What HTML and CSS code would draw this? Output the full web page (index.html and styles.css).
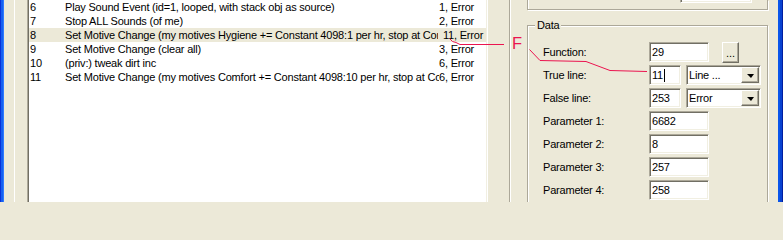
FILE: index.html
```html
<!DOCTYPE html>
<html>
<head>
<meta charset="utf-8">
<link rel="stylesheet" href="styles.css">
</head>
<body>
<div class="window">
  <div class="frame frame-left"></div>
  <div class="sidebar"><div class="splitter"></div></div>
  <div class="list">
    <div class="list-inner">
      <div class="row"><span class="num">6</span><span class="desc">Play Sound Event (id=1, looped, with stack obj as source)</span><span class="status">1, Error</span></div>
      <div class="row"><span class="num">7</span><span class="desc">Stop ALL Sounds (of me)</span><span class="status">2, Error</span></div>
      <div class="row row-sel"><span class="num">8</span><span class="desc desc-wide">Set Motive Change (my motives Hygiene += Constant 4098:1 per hr, stop at Comfort &lt;= 100)</span><span class="status status-wide">11, Error</span></div>
      <div class="row"><span class="num">9</span><span class="desc">Set Motive Change (clear all)</span><span class="status">3, Error</span></div>
      <div class="row"><span class="num">10</span><span class="desc">(priv:) tweak dirt inc</span><span class="status">6, Error</span></div>
      <div class="row"><span class="num">11</span><span class="desc">Set Motive Change (my motives Comfort += Constant 4098:10 per hr, stop at Comfort &lt;= 100)</span><span class="status">6, Error</span></div>
    </div>
  </div>
  <div class="panel">
    <div class="group-top"><div class="field field-top"></div></div>
    <fieldset class="group-data">
      <legend>Data</legend>
      <div class="frow"><span class="flabel">Function:</span><div class="field w60">29</div><div class="btn">...</div></div>
      <div class="frow"><span class="flabel">True line:</span><div class="field w32">11<span class="caret"></span></div><div class="combo"><span class="combo-text">Line ...</span><span class="combo-btn"><span class="arrow"></span></span></div></div>
      <div class="frow"><span class="flabel">False line:</span><div class="field w32">253</div><div class="combo"><span class="combo-text">Error</span><span class="combo-btn"><span class="arrow"></span></span></div></div>
      <div class="frow"><span class="flabel">Parameter 1:</span><div class="field w60">6682</div></div>
      <div class="frow"><span class="flabel">Parameter 2:</span><div class="field w60">8</div></div>
      <div class="frow"><span class="flabel">Parameter 3:</span><div class="field w60">257</div></div>
      <div class="frow"><span class="flabel">Parameter 4:</span><div class="field w60">258</div></div>
    </fieldset>
  </div>
  <div class="frame frame-right"></div>
  <svg class="annot" width="783" height="202" viewBox="0 0 783 202">
    <path d="M449.5 38.5 L452.5 41.5 L456 42.5 L460 44.5 L504 44.5" />
    <path d="M529.5 49.5 L540 60.5 L586 61.5 L610 70.5 L647 71.5" />
    <text x="512" y="49">F</text>
  </svg>
</div>
</body>
</html>
```
FILE: styles.css
```css
html {
  height: 202px;
  overflow: hidden;
}
html, body {
  margin: 0;
  padding: 0;
}
body {
  width: 783px;
  height: 202px;
  overflow: hidden;
  background: #ece9d8;
  font-family: "Liberation Sans", Arial, sans-serif;
  font-size: 11px;
  letter-spacing: -0.2px;
  color: #000;
}
.window {
  position: relative;
  display: flex;
  width: 783px;
  height: 202px;
  overflow: hidden;
}
.frame-left {
  width: 4px;
  flex: none;
  background: linear-gradient(to right, #0831d9 0 1px, #1660f0 1px 3px, #2e7bff 3px 4px);
}
.frame-right {
  width: 5px;
  flex: none;
  background: linear-gradient(to right, #0a55ea 0 2px, #0842d0 2px 4px, #001ea0 4px 5px);
}
.sidebar {
  width: 23px;
  flex: none;
}
.splitter {
  margin-left: 10px;
  height: 100%;
  border-left: 1px solid #fff;
}
.list {
  width: 459px;
  flex: none;
  border-left: 1px solid #aca899;
  border-right: 1px solid #fff;
}
.list-inner {
  height: 100%;
  background: #fff;
  border-left: 1px solid #716f64;
  border-right: 1px solid #f1efe2;
  overflow: hidden;
}
.row {
  display: flex;
  height: 14px;
  line-height: 14px;
  white-space: nowrap;
}
.row-sel {
  background: #ece9d8;
}
.num {
  width: 35px;
  padding-left: 1px;
  flex: none;
}
.desc {
  width: 374px;
  flex: none;
  overflow: hidden;
}
.desc-wide {
  width: 373px;
}
.status {
  flex: none;
}
.status-wide {
  margin-left: 5px;
}
.panel {
  flex: none;
  height: 202px;
  margin-left: 21px;
  padding: 0 10px 0 17px;
  border-left: 1px solid #aca899;
  box-shadow: inset 1px 0 0 #fff;
  width: 241px;
  overflow: hidden;
}
.group-top {
  display: flex;
  box-sizing: border-box;
  width: 241px;
  height: 10px;
  border: 1px solid #aca899;
  border-top: none;
  box-shadow: 1px 1px 0 #fff, inset 1px 0 0 #fff;
}
.field {
  box-sizing: border-box;
  height: 20px;
  background: #fff;
  border: 1px solid;
  border-color: #aca899 #fff #fff #aca899;
  box-shadow: inset 1px 1px 0 #716f64, inset -1px -1px 0 #f1efe2;
  padding: 1px 0 0 2px;
  line-height: 16px;
  white-space: nowrap;
  flex: none;
}
.field-top {
  width: 72px;
  margin-left: 152px;
  margin-top: -17px;
}
.group-data {
  box-sizing: border-box;
  width: 241px;
  height: 190px;
  margin: 9px 0 0 0;
  padding: 10px 0 0 15px;
  border: 1px solid #aca899;
  box-shadow: 1px 1px 0 #fff, inset 1px 1px 0 #fff;
  min-inline-size: 0;
}
.group-data legend {
  margin-left: -8px;
  padding: 0 2px;
  line-height: 13px;
  background: #ece9d8;
}
.frow {
  display: flex;
  align-items: flex-start;
  height: 20px;
  margin-bottom: 3px;
}
.flabel {
  width: 106px;
  flex: none;
  line-height: 20px;
}
.w60 { width: 60px; }
.w32 { width: 32px; }
.caret {
  display: inline-block;
  width: 1px;
  height: 13px;
  background: #000;
  vertical-align: -3px;
  margin-left: 1px;
}
.btn {
  box-sizing: border-box;
  width: 17px;
  height: 21px;
  margin-left: 13px;
  border: 1px solid;
  border-color: #fff #716f64 #716f64 #fff;
  box-shadow: inset -1px -1px 0 #aca899;
  background: #ece9d8;
  text-align: center;
  line-height: 21px;
  letter-spacing: 0;
}
.combo {
  box-sizing: border-box;
  display: flex;
  width: 75px;
  height: 20px;
  margin-left: 5px;
  background: #fff;
  border: 1px solid;
  border-color: #aca899 #fff #fff #aca899;
  box-shadow: inset 1px 1px 0 #716f64, inset -1px -1px 0 #f1efe2;
  padding: 1px;
  flex: none;
}
.combo-text {
  flex: 1;
  padding-left: 1px;
  line-height: 16px;
}
.combo-btn {
  box-sizing: border-box;
  width: 18px;
  height: 16px;
  display: flex;
  align-items: center;
  justify-content: center;
  background: #ece9d8;
  border: 1px solid;
  border-color: #fff #716f64 #716f64 #fff;
  box-shadow: inset -1px -1px 0 #aca899;
}
.arrow {
  width: 0;
  height: 0;
  border-left: 4px solid transparent;
  border-right: 3px solid transparent;
  border-top: 4px solid #000;
  margin-top: 1px;
}
.annot {
  position: absolute;
  left: 0;
  top: 0;
  pointer-events: none;
}
.annot path {
  fill: none;
  stroke: #eb1450;
  stroke-width: 1;
}
.annot text {
  fill: #eb1450;
  font-family: "Liberation Sans", Arial, sans-serif;
  font-size: 16.5px;
  letter-spacing: 0;
}
```
